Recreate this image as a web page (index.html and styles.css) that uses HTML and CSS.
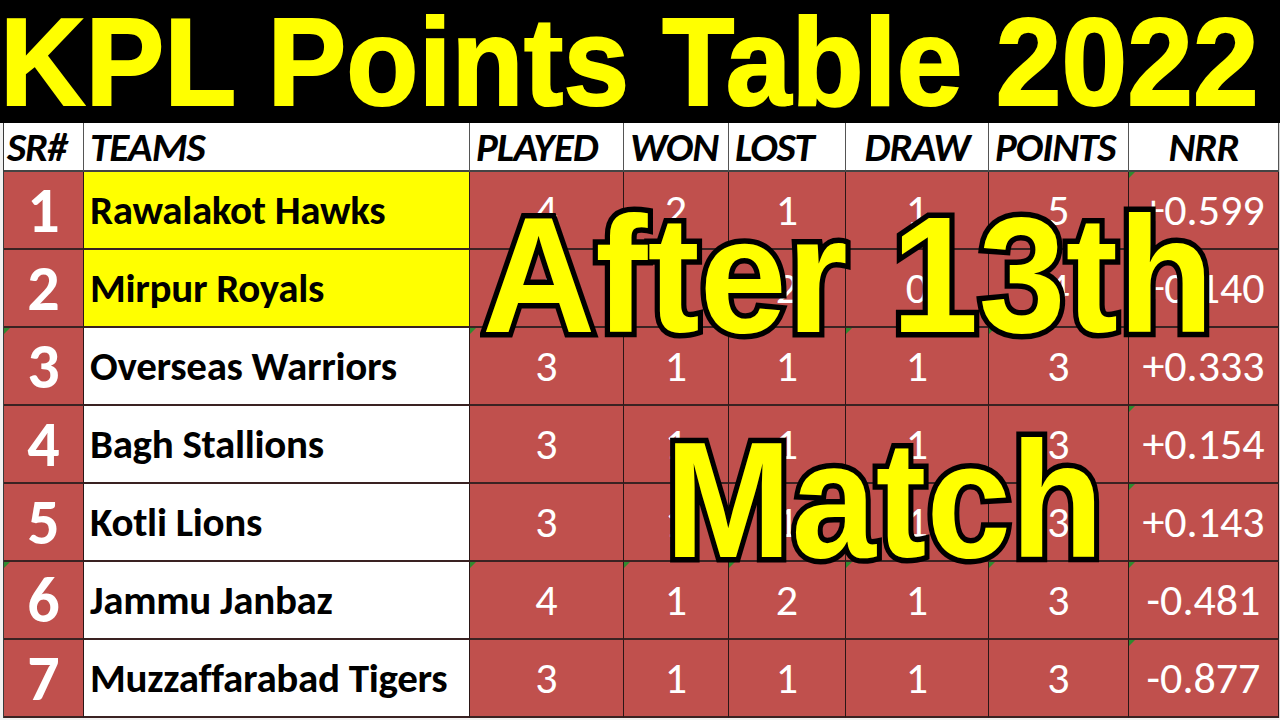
FILE: index.html
```html
<!DOCTYPE html>
<html lang="en">
<head>
<meta charset="utf-8">
<title>KPL Points Table 2022</title>
<link rel="stylesheet" href="styles.css">
</head>
<body>
<div class="page">
  <header class="title"><span class="title-text">KPL Points Table 2022</span></header>
  <div class="table">
    <div class="cell head sr-head">SR#</div>
    <div class="cell head team-head">TEAMS</div>
    <div class="cell head">PLAYED</div>
    <div class="cell head">WON</div>
    <div class="cell head">LOST</div>
    <div class="cell head center">DRAW</div>
    <div class="cell head">POINTS</div>
    <div class="cell head center">NRR</div>

    <div class="cell sr">1</div>
    <div class="cell team hl">Rawalakot Hawks</div>
    <div class="cell num">4</div><div class="cell num">2</div><div class="cell num">1</div><div class="cell num">1</div><div class="cell num">5</div><div class="cell num nrr flag">+0.599</div>

    <div class="cell sr">2</div>
    <div class="cell team hl">Mirpur Royals</div>
    <div class="cell num">4</div><div class="cell num">2</div><div class="cell num">2</div><div class="cell num">0</div><div class="cell num">4</div><div class="cell num nrr flag">+0.140</div>

    <div class="cell sr flag">3</div>
    <div class="cell team">Overseas Warriors</div>
    <div class="cell num flag">3</div><div class="cell num flag">1</div><div class="cell num flag">1</div><div class="cell num flag">1</div><div class="cell num flag">3</div><div class="cell num nrr flag">+0.333</div>

    <div class="cell sr">4</div>
    <div class="cell team">Bagh Stallions</div>
    <div class="cell num">3</div><div class="cell num">1</div><div class="cell num">1</div><div class="cell num">1</div><div class="cell num">3</div><div class="cell num nrr flag">+0.154</div>

    <div class="cell sr">5</div>
    <div class="cell team">Kotli Lions</div>
    <div class="cell num">3</div><div class="cell num">1</div><div class="cell num">1</div><div class="cell num">1</div><div class="cell num">3</div><div class="cell num nrr flag">+0.143</div>

    <div class="cell sr flag">6</div>
    <div class="cell team">Jammu Janbaz</div>
    <div class="cell num flag">4</div><div class="cell num flag">1</div><div class="cell num flag">2</div><div class="cell num flag">1</div><div class="cell num flag">3</div><div class="cell num nrr flag">-0.481</div>

    <div class="cell sr">7</div>
    <div class="cell team">Muzzaffarabad Tigers</div>
    <div class="cell num">3</div><div class="cell num">1</div><div class="cell num">1</div><div class="cell num">1</div><div class="cell num">3</div><div class="cell num nrr flag">-0.877</div>
  </div>
  <div class="ov ov1">After 13th</div>
  <div class="ov ov2">Match</div>
</div>
</body>
</html>
```

FILE: styles.css
```css
html, body {
  margin: 0;
  padding: 0;
  background: #f2f2f2;
}

.page {
  position: relative;
  width: 1280px;
  height: 720px;
  overflow: hidden;
  background: #f2f2f2;
}

.title {
  box-sizing: border-box;
  height: 123px;
  padding-top: 4px;
  background: #000;
  white-space: nowrap;
}

.title-text {
  display: block;
  font-family: "Liberation Sans", Arial, sans-serif;
  font-weight: 700;
  font-size: 118px;
  line-height: 112px;
  color: #ffff00;
  letter-spacing: 0.2px;
  -webkit-text-stroke: 2px #ffff00;
  transform: translateY(4px) scaleY(1.05);
  transform-origin: 0 96px;
}

.table {
  margin-left: 3px;
  width: 1275px;
  display: grid;
  grid-template-columns: 80px 386px 154px 105px 117px 143px 140px 150px;
  grid-template-rows: 49px repeat(7, 78px);
  border-left: 1px solid #3a3a3a;
  border-right: 1px solid #d8d8d8;
}

.cell {
  box-sizing: border-box;
  position: relative;
  display: flex;
  align-items: center;
  border-right: 1px solid #2a1616;
  border-bottom: 2px solid #3a2222;
  background: #c0504d;
  color: #fff;
  font-family: Carlito, Lato, "Open Sans", sans-serif;
  white-space: nowrap;
  overflow: hidden;
}

.head {
  background: #fff;
  color: #000;
  font-weight: 700;
  font-style: italic;
  font-size: 41px;
  padding-left: 6px;
  border-right: 1px solid #555;
  border-bottom: 2px solid #444;
  letter-spacing: -1px;
}

.sr-head {
  padding-left: 3px;
}

.head.center {
  justify-content: center;
  padding-left: 0;
}

.sr {
  justify-content: center;
  font-size: 64px;
  font-weight: 700;
}

.team {
  background: #fff;
  color: #000;
  font-weight: 700;
  font-size: 41px;
  padding-left: 6px;
  letter-spacing: -0.3px;
}

.team.hl {
  background: #ffff00;
}

.num {
  justify-content: center;
  font-size: 44px;
  font-weight: 400;
}

.flag::before {
  content: "";
  position: absolute;
  left: 0;
  top: 0;
  border-top: 6px solid #2f8a2f;
  border-right: 6px solid transparent;
}

.ov {
  position: absolute;
  font-family: "Liberation Sans", Arial, sans-serif;
  font-weight: 700;
  font-size: 165px;
  line-height: 165px;
  color: #ffff00;
  -webkit-text-stroke: 11px #000;
  paint-order: stroke fill;
  white-space: nowrap;
  transform-origin: left top;
}

.ov1 {
  left: 482px;
  top: 193px;
  transform: scaleX(0.95);
}

.ov2 {
  left: 665px;
  top: 418px;
  transform: scaleX(0.92);
}
```
